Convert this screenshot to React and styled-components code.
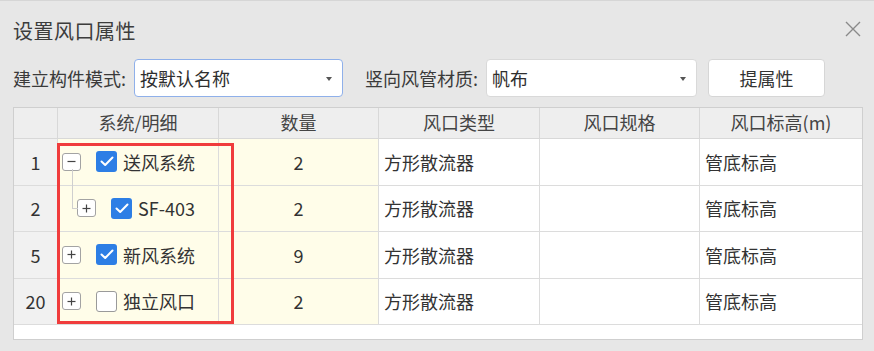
import React from "react";
import styled, { createGlobalStyle } from "styled-components";

const GlobalStyle = createGlobalStyle`
  html, body {
    margin: 0;
    padding: 0;
  }
  body {
    background: #e7e7e7;
    font-family: "Noto Sans CJK SC", "Noto Sans", sans-serif;
    color: #333;
  }
`;

const Dialog = styled.div`
  position: relative;
  box-sizing: border-box;
  width: 874px;
  height: 351px;
  padding: 0 11px 0 13px;
  background: #e7e7e7;
  border-top: 1px solid #d6d6d6;
`;

const TitleBar = styled.div`
  display: flex;
  align-items: center;
  justify-content: space-between;
  height: 58px;
`;

const Title = styled.div`
  font-size: 20px;
  color: #3c3c3c;
  letter-spacing: 0.5px;
`;

const CloseButton = styled.button`
  display: flex;
  padding: 0;
  margin: 0 2px 2px 0;
  border: none;
  background: transparent;
  cursor: pointer;
`;

const Toolbar = styled.div`
  display: flex;
  align-items: center;
  height: 38px;
`;

const Label = styled.span`
  font-size: 18px;
  color: #3a3a3a;
  margin-left: ${({ $gap }) => $gap || 0}px;
  margin-right: 8px;
  white-space: nowrap;
`;

const Select = styled.div`
  position: relative;
  box-sizing: border-box;
  display: flex;
  align-items: center;
  width: ${({ $width }) => $width}px;
  height: 38px;
  padding-left: 5px;
  background: #fff;
  border: 1px solid ${({ $focused }) => ($focused ? "#8fb0ea" : "#d9d9d9")};
  border-radius: 4px;
  font-size: 18px;
  color: #2e2e2e;

  &::after {
    content: "";
    position: absolute;
    right: 10px;
    top: 17px;
    border-left: 3.5px solid transparent;
    border-right: 3.5px solid transparent;
    border-top: 4px solid #555;
  }
`;

const Button = styled.button`
  box-sizing: border-box;
  width: 117px;
  height: 38px;
  margin-left: 11px;
  background: #fff;
  border: 1px solid #d6d6d6;
  border-radius: 4px;
  font-family: inherit;
  font-size: 18px;
  color: #333;
`;

const TableBox = styled.div`
  position: relative;
  box-sizing: border-box;
  height: 233px;
  margin-top: 10px;
  background: #fff;
  border: 1px solid #cfcfcf;
`;

const Grid = styled.div`
  display: grid;
  grid-template-columns: 44px 161px 160px 161px 160px 1fr;
  grid-template-rows: 31px repeat(4, 46.5px);
`;

const cellBg = {
  index: "#f1f1f1",
  tree: "#fffde9",
  qty: "#fffde9",
  text: "#fff",
};

const HeadCell = styled.div`
  box-sizing: border-box;
  display: flex;
  align-items: center;
  justify-content: center;
  background: #eeeeee;
  border-bottom: 1px solid #d8d8d8;
  border-right: ${({ $last }) => ($last ? "none" : "1px solid #d8d8d8")};
  font-size: 18px;
  color: #444;
  padding-bottom: 2px;
`;

const Cell = styled.div`
  box-sizing: border-box;
  display: flex;
  align-items: center;
  justify-content: ${({ $kind }) =>
    $kind === "index" || $kind === "qty" ? "center" : "flex-start"};
  padding-left: ${({ $kind }) => ($kind === "text" ? 5 : 0)}px;
  background: ${({ $kind }) => cellBg[$kind]};
  border-bottom: 1px solid #dcdcdc;
  border-right: ${({ $last }) => ($last ? "none" : "1px solid #dcdcdc")};
  font-size: 18px;
  color: #333;
`;

const TreeNode = styled.div`
  display: flex;
  align-items: center;
  padding-left: ${({ $level }) => 4 + $level * 15}px;
`;

const Expander = styled.span`
  position: relative;
  box-sizing: border-box;
  display: flex;
  align-items: center;
  justify-content: center;
  width: 19px;
  height: 18px;
  background: #fff;
  border: 1px solid #a3a3a3;
  border-radius: 3px;

  &::before {
    content: ${({ $branch }) => ($branch ? '""' : "none")};
    position: absolute;
    left: -6px;
    top: -31px;
    width: 5px;
    height: 39px;
    border-left: 1px solid #cfcfcf;
    border-bottom: 1px solid #cfcfcf;
  }
`;

const Check = styled.span`
  box-sizing: border-box;
  display: flex;
  align-items: center;
  justify-content: center;
  width: 21px;
  height: 21px;
  margin-left: 15px;
  border-radius: 3px;
  background: ${({ $on }) => ($on ? "#2d7ee5" : "#fff")};
  border: ${({ $on }) => ($on ? "none" : "1.5px solid #9a9a9a")};
`;

const NodeName = styled.span`
  margin-left: 6px;
  font-size: 18px;
  color: #333;
`;

const Highlight = styled.div`
  position: absolute;
  left: 43px;
  top: 35px;
  box-sizing: border-box;
  width: 177px;
  height: 181px;
  border: 3px solid #f03c3c;
  pointer-events: none;
`;

const CloseIcon = () => (
  <svg width="16" height="16" viewBox="0 0 16 16">
    <path d="M1 1 L15 15 M15 1 L1 15" stroke="#8a8a8a" strokeWidth="1.4" fill="none" />
  </svg>
);

const ToggleIcon = ({ open }) => (
  <svg width="9" height="9" viewBox="0 0 9 9">
    <path d="M0.5 4.5 H8.5" stroke="#444" strokeWidth="1.2" />
    {!open && <path d="M4.5 0.5 V8.5" stroke="#444" strokeWidth="1.2" />}
  </svg>
);

const CheckIcon = () => (
  <svg width="14" height="11" viewBox="0 0 14 11">
    <path d="M1.5 5.5 L5.2 9 L12.5 1.5" stroke="#fff" strokeWidth="2" fill="none" strokeLinecap="round" strokeLinejoin="round" />
  </svg>
);

const columns = ["", "系统/明细", "数量", "风口类型", "风口规格", "风口标高(m)"];

const rows = [
  { no: 1, name: "送风系统", level: 0, open: true, checked: true, qty: 2 },
  { no: 2, name: "SF-403", level: 1, open: false, checked: true, qty: 2, branch: true },
  { no: 5, name: "新风系统", level: 0, open: false, checked: true, qty: 9 },
  { no: 20, name: "独立风口", level: 0, open: false, checked: false, qty: 2 },
];

const App = () => {
  return (
    <>
      <GlobalStyle />
      <Dialog>
        <TitleBar>
          <Title>设置风口属性</Title>
          <CloseButton title="关闭">
            <CloseIcon />
          </CloseButton>
        </TitleBar>

        <Toolbar>
          <Label>建立构件模式:</Label>
          <Select $width={209} $focused>按默认名称</Select>
          <Label $gap={22}>竖向风管材质:</Label>
          <Select $width={211}>帆布</Select>
          <Button>提属性</Button>
        </Toolbar>

        <TableBox>
          <Grid>
            {columns.map((c, i) => (
              <HeadCell key={i} $last={i === columns.length - 1}>
                {c}
              </HeadCell>
            ))}
            {rows.map((r) => (
              <React.Fragment key={r.no}>
                <Cell $kind="index">{r.no}</Cell>
                <Cell $kind="tree">
                  <TreeNode $level={r.level}>
                    <Expander $branch={r.branch}>
                      <ToggleIcon open={r.open} />
                    </Expander>
                    <Check $on={r.checked}>{r.checked && <CheckIcon />}</Check>
                    <NodeName>{r.name}</NodeName>
                  </TreeNode>
                </Cell>
                <Cell $kind="qty">{r.qty}</Cell>
                <Cell $kind="text">方形散流器</Cell>
                <Cell $kind="text"></Cell>
                <Cell $kind="text" $last>管底标高</Cell>
              </React.Fragment>
            ))}
          </Grid>
          <Highlight />
        </TableBox>
      </Dialog>
    </>
  );
};

export default App;
